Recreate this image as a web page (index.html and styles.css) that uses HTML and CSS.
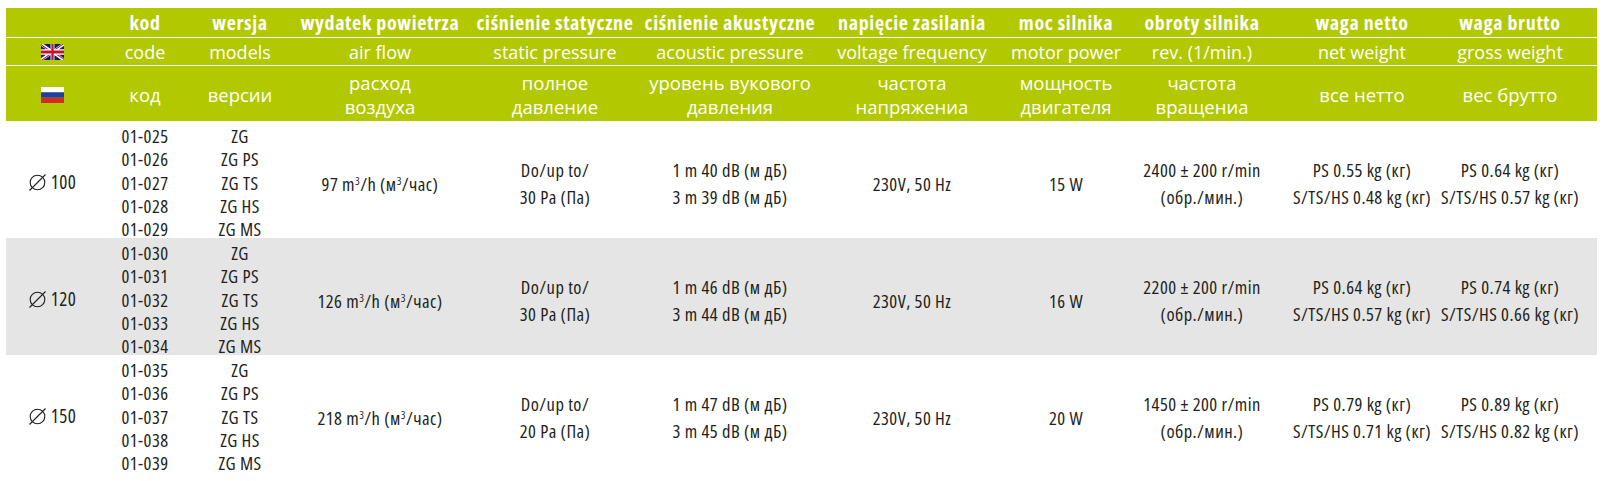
FILE: index.html
```html
<!DOCTYPE html>
<html lang="pl">
<head>
<meta charset="utf-8">
<title>Tabela</title>
<link rel="stylesheet" href="styles.css">
</head>
<body>
<div class="table">
  <div class="row head h1">
    <div class="cell"></div>
    <div class="cell">kod</div>
    <div class="cell">wersja</div>
    <div class="cell">wydatek powietrza</div>
    <div class="cell">ciśnienie statyczne</div>
    <div class="cell">ciśnienie akustyczne</div>
    <div class="cell">napięcie zasilania</div>
    <div class="cell">moc silnika</div>
    <div class="cell">obroty silnika</div>
    <div class="cell">waga netto</div>
    <div class="cell">waga brutto</div>
  </div>
  <div class="row head h2">
    <div class="cell">
      <svg class="flag" viewBox="0 0 60 30" preserveAspectRatio="none" aria-label="EN">
        <clipPath id="t"><path d="M30,15 h30 v15 z v15 h-30 z h-30 v-15 z v-15 h30 z"/></clipPath>
        <path d="M0,0 v30 h60 v-30 z" fill="#012169"/>
        <path d="M0,0 L60,30 M60,0 L0,30" stroke="#fff" stroke-width="6"/>
        <path d="M0,0 L60,30 M60,0 L0,30" clip-path="url(#t)" stroke="#C8102E" stroke-width="4"/>
        <path d="M30,0 v30 M0,15 h60" stroke="#fff" stroke-width="10"/>
        <path d="M30,0 v30 M0,15 h60" stroke="#C8102E" stroke-width="6"/>
      </svg>
    </div>
    <div class="cell">code</div>
    <div class="cell">models</div>
    <div class="cell">air flow</div>
    <div class="cell">static pressure</div>
    <div class="cell">acoustic pressure</div>
    <div class="cell">voltage frequency</div>
    <div class="cell">motor power</div>
    <div class="cell">rev. (1/min.)</div>
    <div class="cell">net weight</div>
    <div class="cell">gross weight</div>
  </div>
  <div class="row head h3">
    <div class="cell">
      <svg class="flag" viewBox="0 0 3 3" preserveAspectRatio="none" aria-label="RU">
        <rect width="3" height="1" y="0" fill="#ffffff"/>
        <rect width="3" height="1" y="1" fill="#1c3fa8"/>
        <rect width="3" height="1" y="2" fill="#d52b1e"/>
      </svg>
    </div>
    <div class="cell">код</div>
    <div class="cell">версии</div>
    <div class="cell"><span>расход</span><span>воздуха</span></div>
    <div class="cell"><span>полное</span><span>давление</span></div>
    <div class="cell"><span>уровень вукового</span><span>давления</span></div>
    <div class="cell"><span>частота</span><span>напряжениа</span></div>
    <div class="cell"><span>мощность</span><span>двигателя</span></div>
    <div class="cell"><span>частота</span><span>вращениа</span></div>
    <div class="cell">все нетто</div>
    <div class="cell">вес брутто</div>
  </div>

  <div class="row data">
    <div class="cell dia"><svg class="phi" viewBox="0 0 19 17"><circle cx="9.5" cy="8.5" r="7.3"/><line x1="1.5" y1="16.5" x2="17.5" y2="0.5"/></svg><span>100</span></div>
    <div class="cell list"><span>01-025</span><span>01-026</span><span>01-027</span><span>01-028</span><span>01-029</span></div>
    <div class="cell list"><span>ZG</span><span>ZG PS</span><span>ZG TS</span><span>ZG HS</span><span>ZG MS</span></div>
    <div class="cell one"><span>97 m<sup>3</sup>/h (м<sup>3</sup>/час)</span></div>
    <div class="cell two"><span>Do/up to/</span><span>30 Pa (Па)</span></div>
    <div class="cell two"><span>1 m 40 dB (м дБ)</span><span>3 m 39 dB (м дБ)</span></div>
    <div class="cell one"><span>230V, 50 Hz</span></div>
    <div class="cell one"><span>15 W</span></div>
    <div class="cell two"><span>2400 ± 200 r/min</span><span>(обр./мин.)</span></div>
    <div class="cell two"><span>PS 0.55 kg (кг)</span><span>S/TS/HS 0.48 kg (кг)</span></div>
    <div class="cell two"><span>PS 0.64 kg (кг)</span><span>S/TS/HS 0.57 kg (кг)</span></div>
  </div>

  <div class="row data alt">
    <div class="cell dia"><svg class="phi" viewBox="0 0 19 17"><circle cx="9.5" cy="8.5" r="7.3"/><line x1="1.5" y1="16.5" x2="17.5" y2="0.5"/></svg><span>120</span></div>
    <div class="cell list"><span>01-030</span><span>01-031</span><span>01-032</span><span>01-033</span><span>01-034</span></div>
    <div class="cell list"><span>ZG</span><span>ZG PS</span><span>ZG TS</span><span>ZG HS</span><span>ZG MS</span></div>
    <div class="cell one"><span>126 m<sup>3</sup>/h (м<sup>3</sup>/час)</span></div>
    <div class="cell two"><span>Do/up to/</span><span>30 Pa (Па)</span></div>
    <div class="cell two"><span>1 m 46 dB (м дБ)</span><span>3 m 44 dB (м дБ)</span></div>
    <div class="cell one"><span>230V, 50 Hz</span></div>
    <div class="cell one"><span>16 W</span></div>
    <div class="cell two"><span>2200 ± 200 r/min</span><span>(обр./мин.)</span></div>
    <div class="cell two"><span>PS 0.64 kg (кг)</span><span>S/TS/HS 0.57 kg (кг)</span></div>
    <div class="cell two"><span>PS 0.74 kg (кг)</span><span>S/TS/HS 0.66 kg (кг)</span></div>
  </div>

  <div class="row data">
    <div class="cell dia"><svg class="phi" viewBox="0 0 19 17"><circle cx="9.5" cy="8.5" r="7.3"/><line x1="1.5" y1="16.5" x2="17.5" y2="0.5"/></svg><span>150</span></div>
    <div class="cell list"><span>01-035</span><span>01-036</span><span>01-037</span><span>01-038</span><span>01-039</span></div>
    <div class="cell list"><span>ZG</span><span>ZG PS</span><span>ZG TS</span><span>ZG HS</span><span>ZG MS</span></div>
    <div class="cell one"><span>218 m<sup>3</sup>/h (м<sup>3</sup>/час)</span></div>
    <div class="cell two"><span>Do/up to/</span><span>20 Pa (Па)</span></div>
    <div class="cell two"><span>1 m 47 dB (м дБ)</span><span>3 m 45 dB (м дБ)</span></div>
    <div class="cell one"><span>230V, 50 Hz</span></div>
    <div class="cell one"><span>20 W</span></div>
    <div class="cell two"><span>1450 ± 200 r/min</span><span>(обр./мин.)</span></div>
    <div class="cell two"><span>PS 0.79 kg (кг)</span><span>S/TS/HS 0.71 kg (кг)</span></div>
    <div class="cell two"><span>PS 0.89 kg (кг)</span><span>S/TS/HS 0.82 kg (кг)</span></div>
  </div>
</div>
</body>
</html>
```

FILE: styles.css
```css
html, body {
  background: #ffffff;
}
body {
  margin: 8px 0 0 6px;
  font-family: "Open Sans", sans-serif;
  font-stretch: 75%;
  font-weight: 500;
  color: #231f20;
}
.table {
  width: 1591px;
  display: flex;
  flex-direction: column;
}
.row {
  display: grid;
  grid-template-columns: 92px 94px 96px 184px 166px 184px 180px 128px 144px 176px 120px 27px;
}
.cell {
  display: flex;
  flex-direction: column;
  justify-content: center;
  align-items: center;
  text-align: center;
  white-space: nowrap;
}
.head {
  background: #b2c800;
  color: #ffffff;
}
.h1 {
  height: 29px;
  font-weight: 700;
  font-size: 20px;
  letter-spacing: 0.65px;
  border-bottom: 1px solid #ffffff;
}
.h2 {
  height: 27px;
  font-size: 18px;
  font-stretch: 100%;
  border-bottom: 1px solid #ffffff;
}
.h3 {
  height: 55px;
  font-size: 18.5px;
  font-stretch: 100%;
  line-height: 24px;
  padding-top: 3px;
  box-sizing: border-box;
}
.flag {
  width: 23px;
  height: 16px;
  display: block;
}
.data {
  height: 117px;
  font-size: 18.5px;
  letter-spacing: 0.45px;
}
.alt {
  background: #e5e5e5;
}
.list {
  justify-content: flex-start;
  line-height: 23.3px;
  padding-top: 3px;
}
.one {
  padding-top: 5px;
}
.two {
  line-height: 27px;
  padding-top: 4px;
}
.dia {
  flex-direction: row;
  gap: 4px;
  font-size: 19px;
  padding-top: 3px;
}
.phi {
  width: 19px;
  height: 17px;
  fill: none;
  stroke: #231f20;
  stroke-width: 1.1;
}
sup {
  font-size: 0.6em;
  line-height: 0;
  vertical-align: 0.55em;
}
```
